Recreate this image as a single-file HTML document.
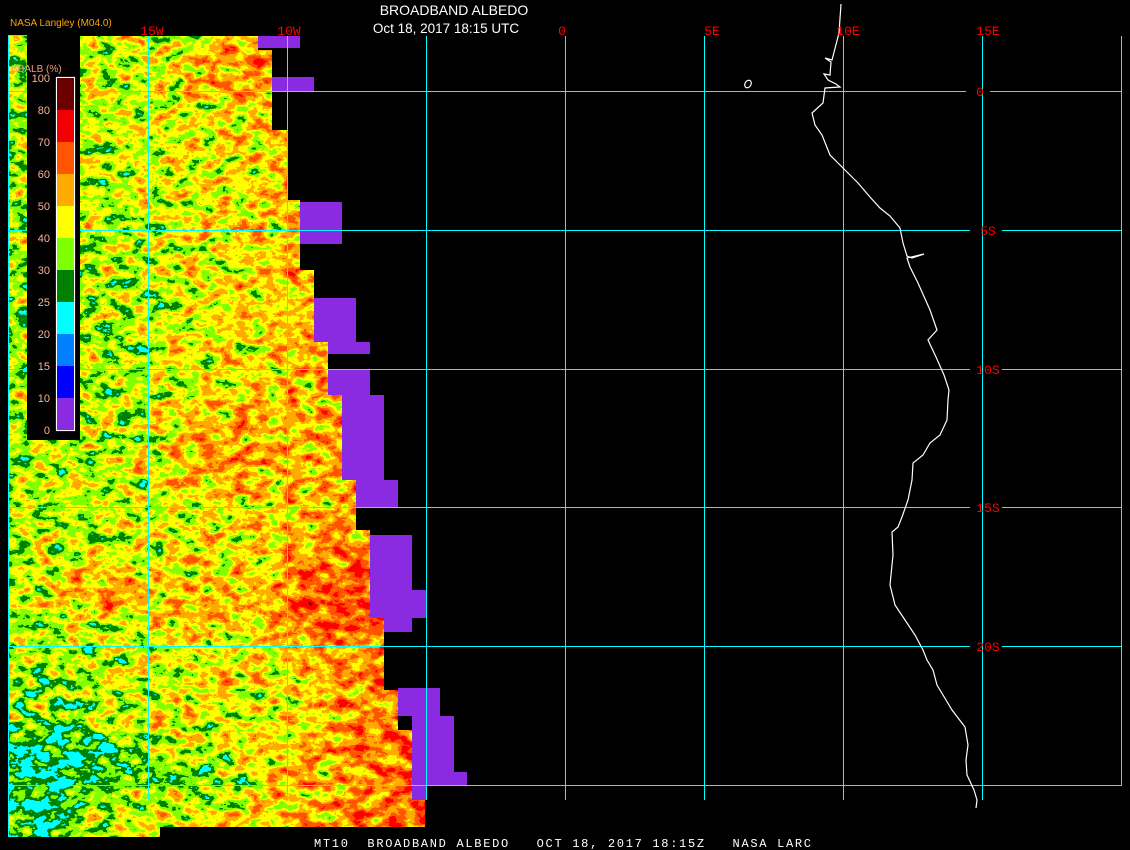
<!DOCTYPE html>
<html><head><meta charset="utf-8"><style>
html,body{margin:0;padding:0;background:#000;width:1130px;height:850px;overflow:hidden}
svg{display:block}
</style></head><body>
<svg width="1130" height="850" viewBox="0 0 1130 850" xmlns="http://www.w3.org/2000/svg">
<defs>
<filter id="alb" x="0" y="0" width="1130" height="850" filterUnits="userSpaceOnUse" color-interpolation-filters="sRGB">
  <feTurbulence type="fractalNoise" baseFrequency="0.06 0.09" numOctaves="4" seed="7" result="n"/>
  <feColorMatrix in="n" type="matrix" values="1 0 0 0 0  1 0 0 0 0  1 0 0 0 0  0 0 0 0 1" result="g"/>
  <feComposite in="SourceGraphic" in2="g" operator="arithmetic" k1="0" k2="1" k3="0.75" k4="-0.375" result="c"/>
  <feComponentTransfer in="c" result="m">
    <feFuncR type="discrete" tableValues="0 0 0 0.5 1 1 1 1 1 0.44"/>
    <feFuncG type="discrete" tableValues="1 1 0.5 1 1 0.67 0.33 0 0 0"/>
    <feFuncB type="discrete" tableValues="1 1 0 0 0 0 0 0 0 0"/>
    <feFuncA type="discrete" tableValues="1"/>
  </feComponentTransfer>
</filter>
<linearGradient id="lv" x1="80" y1="0" x2="425" y2="0" gradientUnits="userSpaceOnUse">
  <stop offset="0" stop-color="#646464"/>
  <stop offset="0.45" stop-color="#767676"/>
  <stop offset="0.75" stop-color="#8c8c8c"/>
  <stop offset="1" stop-color="#a6a6a6"/>
</linearGradient>
<filter id="bl"><feGaussianBlur stdDeviation="14"/></filter>
<clipPath id="cp"><path d="M8 36 H27 V440 H80 V36 H258 V50 H272 V130 H287 V200 H300 V270 H314 V340 H328 V370 H342 V480 H356 V530 H370 V590 H384 V690 H398 V730 H412 V800 H425 V827 H160 V837 H8 Z"/></clipPath>
</defs>

<g clip-path="url(#cp)">
<g filter="url(#alb)">
  <rect x="0" y="30" width="440" height="820" fill="url(#lv)"/>
  <g filter="url(#bl)">
    <rect x="8" y="36" width="19" height="404" fill="#5c5c5c"/>
    <ellipse cx="60" cy="760" rx="70" ry="30" fill="#303030"/>
    <ellipse cx="40" cy="815" rx="40" ry="25" fill="#303030"/>
    <ellipse cx="190" cy="775" rx="70" ry="18" fill="#4a4a4a"/>
    <ellipse cx="50" cy="700" rx="50" ry="30" fill="#555"/>
    <ellipse cx="120" cy="320" rx="40" ry="120" fill="#5e5e5e"/>
    <ellipse cx="110" cy="590" rx="60" ry="20" fill="#909090"/>
    <ellipse cx="200" cy="600" rx="50" ry="20" fill="#8c8c8c"/>
    <ellipse cx="330" cy="600" rx="50" ry="40" fill="#a8a8a8"/>
    <ellipse cx="230" cy="450" rx="60" ry="40" fill="#8c8c8c"/>
    <ellipse cx="240" cy="70" rx="40" ry="25" fill="#949494"/>
    <ellipse cx="260" cy="700" rx="60" ry="30" fill="#707070"/>
  </g>
</g>
</g>

<g fill="#8a2be2">
  <rect x="258" y="36" width="42" height="12"/>
  <rect x="272" y="77" width="42" height="14"/>
  <rect x="300" y="202" width="42" height="42"/>
  <rect x="314" y="298" width="42" height="44"/>
  <rect x="328" y="342" width="42" height="12"/>
  <rect x="328" y="369" width="42" height="26"/>
  <rect x="342" y="395" width="42" height="85"/>
  <rect x="356" y="480" width="42" height="13"/>
  <rect x="356" y="493" width="42" height="15"/>
  <rect x="370" y="535" width="42" height="55"/>
  <rect x="370" y="590" width="56" height="28"/>
  <rect x="384" y="618" width="28" height="14"/>
  <rect x="398" y="688" width="42" height="28"/>
  <rect x="412" y="716" width="42" height="56"/>
  <rect x="412" y="772" width="55" height="13"/>
  <rect x="412" y="785" width="14" height="15"/>
</g>

<g fill="#00ffff" shape-rendering="crispEdges">
  <rect x="8" y="35" width="1" height="801"/>
  <rect x="148" y="36" width="1" height="764"/>
  <rect x="287" y="36" width="1" height="764"/>
  <rect x="426" y="36" width="1" height="764"/>
  <rect x="565" y="36" width="1" height="764"/>
  <rect x="704" y="36" width="1" height="764"/>
  <rect x="843" y="36" width="1" height="764"/>
  <rect x="982" y="36" width="1" height="764"/>
  <rect x="1121" y="36" width="1" height="750"/>
  <rect x="8" y="35" width="19" height="1"/>
  <rect x="8" y="91" width="958" height="1"/><rect x="990" y="91" width="131" height="1"/>
  <rect x="8" y="230" width="962" height="1"/><rect x="1002" y="230" width="119" height="1"/>
  <rect x="8" y="369" width="962" height="1"/><rect x="1002" y="369" width="119" height="1"/>
  <rect x="8" y="507" width="962" height="1"/><rect x="1002" y="507" width="119" height="1"/>
  <rect x="8" y="646" width="962" height="1"/><rect x="1002" y="646" width="119" height="1"/>
  <rect x="8" y="785" width="1114" height="1"/>
</g>

<polyline fill="none" stroke="#fff" stroke-width="1.2" points="841,4 839,33 832,60 825,58 831,62 830,75 824,74 828,80 836,84 840,87 825,88 823,103 812,113 815,125 822,135 830,155 843,168 858,183 870,197 880,208 890,216 900,228 903,243 907,256 912,258 924,254 907,258 910,267 918,283 930,310 937,330 928,340 936,357 944,375 949,390 948,400 947,420 940,435 930,443 923,455 913,463 912,480 908,500 902,517 898,527 892,532 893,555 890,585 895,605 905,620 915,635 923,650 927,660 933,670 937,685 946,700 952,710 965,727 968,745 966,760 967,775 974,790 977,800 976,808"/>
<ellipse cx="748" cy="84" rx="3" ry="4" fill="none" stroke="#fff" stroke-width="1.2" transform="rotate(30 748 84)"/>

<rect x="27" y="36" width="53" height="404" fill="#000"/>
<g>
  <rect x="56.5" y="77.5" width="18" height="353" fill="none" stroke="#fff" stroke-width="1.2"/>
  <rect x="57" y="78" width="17" height="32" fill="#6b0000"/>
  <rect x="57" y="110" width="17" height="32" fill="#f00000"/>
  <rect x="57" y="142" width="17" height="32" fill="#ff5500"/>
  <rect x="57" y="174" width="17" height="32" fill="#ffaa00"/>
  <rect x="57" y="206" width="17" height="32" fill="#ffff00"/>
  <rect x="57" y="238" width="17" height="32" fill="#80ff00"/>
  <rect x="57" y="270" width="17" height="32" fill="#008000"/>
  <rect x="57" y="302" width="17" height="32" fill="#00ffff"/>
  <rect x="57" y="334" width="17" height="32" fill="#0080ff"/>
  <rect x="57" y="366" width="17" height="32" fill="#0000ff"/>
  <rect x="57" y="398" width="17" height="32" fill="#8a2be2"/>
</g>
<g font-family="Liberation Sans, sans-serif" font-size="11" fill="#ffb090" text-anchor="end">
  <text x="50" y="82">100</text><text x="50" y="114">80</text><text x="50" y="146">70</text>
  <text x="50" y="178">60</text><text x="50" y="210">50</text><text x="50" y="242">40</text>
  <text x="50" y="274">30</text><text x="50" y="306">25</text><text x="50" y="338">20</text>
  <text x="50" y="370">15</text><text x="50" y="402">10</text><text x="50" y="434">0</text>
</g>
<text x="11" y="72" font-family="Liberation Sans, sans-serif" font-size="10" fill="#ff9a7a">BBALB (%)</text>
<text x="10" y="26" font-family="Liberation Sans, sans-serif" font-size="10" fill="#ffa500">NASA Langley (M04.0)</text>

<text x="454" y="15" text-anchor="middle" font-family="Liberation Sans, sans-serif" font-size="14" fill="#fff">BROADBAND ALBEDO</text>
<text x="446" y="33" text-anchor="middle" font-family="Liberation Sans, sans-serif" font-size="13.5" fill="#fff">Oct 18, 2017 18:15 UTC</text>

<g font-family="Liberation Mono, monospace" font-size="13" fill="#ff0000" text-anchor="middle">
  <text x="152" y="35">15W</text><text x="289" y="35">10W</text>
  <text x="562" y="35">0</text><text x="712" y="35">5E</text>
  <text x="848" y="35">10E</text><text x="988" y="35">15E</text>
  <text x="980" y="96">0</text>
  <text x="988" y="235">5S</text><text x="988" y="374">10S</text>
  <text x="988" y="512">15S</text><text x="988" y="651">20S</text>
</g>

<text x="314" y="847" font-family="Liberation Mono, monospace" font-size="12" fill="#fff" textLength="497" lengthAdjust="spacing" xml:space="preserve">MT10  BROADBAND ALBEDO   OCT 18, 2017 18:15Z   NASA LARC</text>
</svg>
</body></html>
